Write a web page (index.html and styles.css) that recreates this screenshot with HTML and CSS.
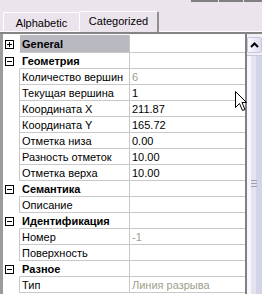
FILE: index.html
```html
<!DOCTYPE html>
<html lang="ru">
<head>
  <meta charset="UTF-8">
  <title>Properties</title>
  <link rel="stylesheet" href="styles.css">
</head>
<body>
  <div class="strip">
    <div class="toolbar-edge"><span class="seg-a"></span><span class="seg-b"></span><span class="seg-c"></span></div>
    <div class="tabs">
      <div class="tab">Alphabetic</div>
      <div class="tab active">Categorized</div>
    </div>
  </div>
  <div class="grid">
    <div class="rows">
      <div class="row cat selected">
        <span class="box"><svg width="9" height="9" viewBox="0 0 9 9"><rect x="0.5" y="0.5" width="8" height="8" fill="#fff" stroke="#000"/><path d="M2 4.5h5M4.5 2v5" stroke="#000"/></svg></span>
        <span class="name">General</span><span class="value"></span>
      </div>
      <div class="row cat">
        <span class="box"><svg width="9" height="9" viewBox="0 0 9 9"><rect x="0.5" y="0.5" width="8" height="8" fill="#fff" stroke="#000"/><path d="M2 4.5h5" stroke="#000"/></svg></span>
        <span class="name">Геометрия</span><span class="value"></span>
      </div>
      <div class="row"><span class="box"></span><span class="name">Количество вершин</span><span class="value muted">6</span></div>
      <div class="row"><span class="box"></span><span class="name">Текущая вершина</span><span class="value">1</span></div>
      <div class="row"><span class="box"></span><span class="name">Координата X</span><span class="value">211.87</span></div>
      <div class="row"><span class="box"></span><span class="name">Координата Y</span><span class="value">165.72</span></div>
      <div class="row"><span class="box"></span><span class="name">Отметка низа</span><span class="value">0.00</span></div>
      <div class="row"><span class="box"></span><span class="name">Разность отметок</span><span class="value">10.00</span></div>
      <div class="row"><span class="box"></span><span class="name">Отметка верха</span><span class="value">10.00</span></div>
      <div class="row cat">
        <span class="box"><svg width="9" height="9" viewBox="0 0 9 9"><rect x="0.5" y="0.5" width="8" height="8" fill="#fff" stroke="#000"/><path d="M2 4.5h5" stroke="#000"/></svg></span>
        <span class="name">Семантика</span><span class="value"></span>
      </div>
      <div class="row"><span class="box"></span><span class="name">Описание</span><span class="value"></span></div>
      <div class="row cat">
        <span class="box"><svg width="9" height="9" viewBox="0 0 9 9"><rect x="0.5" y="0.5" width="8" height="8" fill="#fff" stroke="#000"/><path d="M2 4.5h5" stroke="#000"/></svg></span>
        <span class="name">Идентификация</span><span class="value"></span>
      </div>
      <div class="row"><span class="box"></span><span class="name">Номер</span><span class="value muted">-1</span></div>
      <div class="row"><span class="box"></span><span class="name">Поверхность</span><span class="value"></span></div>
      <div class="row cat">
        <span class="box"><svg width="9" height="9" viewBox="0 0 9 9"><rect x="0.5" y="0.5" width="8" height="8" fill="#fff" stroke="#000"/><path d="M2 4.5h5" stroke="#000"/></svg></span>
        <span class="name">Разное</span><span class="value"></span>
      </div>
      <div class="row"><span class="box"></span><span class="name">Тип</span><span class="value muted">Линия разрыва</span></div>
    </div>
    <div class="scrollbar">
      <div class="up"><svg width="9" height="6" viewBox="0 0 9 6"><path d="M1 5L4.5 1.5L8 5" fill="none" stroke="#000" stroke-width="2"/></svg></div>
      <div class="thumb"><span class="grip"></span></div>
    </div>
  </div>
  <svg class="cursor" width="12" height="21" viewBox="0 0 12 21"><path d="M0.5 0.5V16.5L4.5 12.5L7.5 19.5L10 18.5L7 11.5H11.5Z" fill="#fff" stroke="#000"/></svg>
</body>
</html>
```
FILE: styles.css
```css
body {
  margin: 0;
  width: 262px;
  height: 294px;
  overflow: hidden;
  background: #ece4ec;
  font-family: "Liberation Sans", Arial, sans-serif;
  font-size: 11px;
  color: #000;
  position: relative;
}
.strip {
  height: 31px;
  display: flex;
  flex-direction: column;
  border-bottom: 1px solid #fff;
}
.toolbar-edge {
  display: flex;
  justify-content: flex-end;
  height: 2px;
  gap: 1px;
}
.toolbar-edge span {
  background: #808080;
}
.seg-a { width: 27px; }
.seg-b { width: 24px; }
.seg-c { width: 18px; }
.tabs {
  margin-top: auto;
  display: flex;
  align-items: flex-end;
  padding-left: 3px;
}
.tab {
  box-sizing: border-box;
  width: 76px;
  height: 19px;
  padding-top: 4px;
  text-align: center;
  border: 1px solid #fff;
  border-bottom: none;
  border-right: none;
  border-radius: 2px 2px 0 0;
}
.tab.active {
  width: 80px;
  height: 21px;
  padding-top: 3px;
  margin-bottom: -1px;
  background: #ece4ec;
  border-right: 2px solid #909090;
}
.grid {
  display: flex;
  height: 260px;
  border-top: 2px solid #848484;
}
.rows {
  width: 242px;
  background: #fff;
  border-left: 3px solid #9c9c9c;
  border-right: 2px solid #808080;
  padding-top: 1px;
}
.row {
  display: grid;
  grid-template-columns: 16px 110px 116px;
  height: 16px;
}
.row:first-child {
  height: 18px;
}
.row > span {
  display: flex;
  align-items: center;
  white-space: nowrap;
  overflow: hidden;
}
.name, .value {
  border-bottom: 1px solid #c8c8c8;
  padding-left: 2px;
}
.name {
  border-left: 1px solid #c8c8c8;
}
.value {
  border-left: 1px solid #c8c8c8;
}
.box {
  padding-left: 2px;
}
.cat .name {
  border-left-color: #fff;
  font-weight: bold;
}
.selected .name {
  background: #b8b8c0;
}
.muted {
  color: #a0a08c;
}
.scrollbar {
  width: 15px;
  background: #f0f0f8;
  display: flex;
  flex-direction: column;
  gap: 2px;
  padding-top: 3px;
}
.up {
  height: 14px;
  display: flex;
  align-items: center;
  justify-content: center;
  background: linear-gradient(to right, #fafaff, #dcdcec);
  border: 1px solid #c8c8dc;
  border-radius: 2px;
}
.thumb {
  flex: 1;
  position: relative;
  background: linear-gradient(to right, #f8f8fc 0 4px, #e4e4f0 4px 9px, #d4d4e8 9px);
  border-top: 1px solid #c8c8dc;
}
.grip {
  position: absolute;
  left: 4px;
  top: 124px;
  width: 6px;
  height: 5px;
  border-top: 1px solid #a0a0b4;
  border-bottom: 1px solid #a0a0b4;
}
.grip::after {
  content: "";
  position: absolute;
  left: 0;
  top: 2px;
  width: 6px;
  border-top: 1px solid #a0a0b4;
}
.cursor {
  position: absolute;
  left: 235px;
  top: 91px;
}
```
